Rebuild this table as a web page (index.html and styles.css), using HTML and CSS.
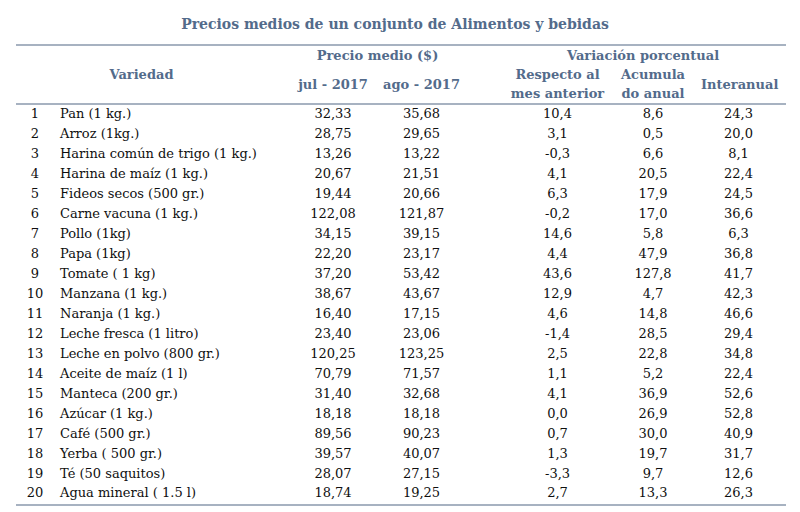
FILE: index.html
```html
<!DOCTYPE html>
<html lang="es">
<head>
<meta charset="utf-8">
<title>Precios medios</title>
<link rel="stylesheet" href="styles.css">
</head>
<body>
<div class="page">
  <h1 class="title">Precios medios de un conjunto de Alimentos y bebidas</h1>
  <table class="prices">
    <colgroup>
      <col class="c-idx"><col class="c-name"><col class="c-jul"><col class="c-ago"><col class="c-resp"><col class="c-acum"><col class="c-inter">
    </colgroup>
    <thead>
      <tr class="h1">
        <th class="variedad" colspan="2" rowspan="2">Variedad</th>
        <th class="precio" colspan="2">Precio medio ($)</th>
        <th class="variacion" colspan="3">Variación porcentual</th>
      </tr>
      <tr class="h2">
        <th>jul - 2017</th>
        <th class="ago">ago - 2017</th>
        <th class="two">Respecto al<br>mes anterior</th>
        <th class="two">Acumula<br>do anual</th>
        <th class="inter">Interanual</th>
      </tr>
    </thead>
    <tbody>
      <tr><td class="idx">1</td><td class="name">Pan (1 kg.)</td><td>32,33</td><td class="ago">35,68</td><td>10,4</td><td>8,6</td><td class="inter">24,3</td></tr>
      <tr><td class="idx">2</td><td class="name">Arroz (1kg.)</td><td>28,75</td><td class="ago">29,65</td><td>3,1</td><td>0,5</td><td class="inter">20,0</td></tr>
      <tr><td class="idx">3</td><td class="name">Harina común de trigo (1 kg.)</td><td>13,26</td><td class="ago">13,22</td><td>-0,3</td><td>6,6</td><td class="inter">8,1</td></tr>
      <tr><td class="idx">4</td><td class="name">Harina de maíz (1 kg.)</td><td>20,67</td><td class="ago">21,51</td><td>4,1</td><td>20,5</td><td class="inter">22,4</td></tr>
      <tr><td class="idx">5</td><td class="name">Fideos secos (500 gr.)</td><td>19,44</td><td class="ago">20,66</td><td>6,3</td><td>17,9</td><td class="inter">24,5</td></tr>
      <tr><td class="idx">6</td><td class="name">Carne vacuna (1 kg.)</td><td>122,08</td><td class="ago">121,87</td><td>-0,2</td><td>17,0</td><td class="inter">36,6</td></tr>
      <tr><td class="idx">7</td><td class="name">Pollo (1kg)</td><td>34,15</td><td class="ago">39,15</td><td>14,6</td><td>5,8</td><td class="inter">6,3</td></tr>
      <tr><td class="idx">8</td><td class="name">Papa (1kg)</td><td>22,20</td><td class="ago">23,17</td><td>4,4</td><td>47,9</td><td class="inter">36,8</td></tr>
      <tr><td class="idx">9</td><td class="name">Tomate ( 1 kg)</td><td>37,20</td><td class="ago">53,42</td><td>43,6</td><td>127,8</td><td class="inter">41,7</td></tr>
      <tr><td class="idx">10</td><td class="name">Manzana (1 kg.)</td><td>38,67</td><td class="ago">43,67</td><td>12,9</td><td>4,7</td><td class="inter">42,3</td></tr>
      <tr><td class="idx">11</td><td class="name">Naranja (1 kg.)</td><td>16,40</td><td class="ago">17,15</td><td>4,6</td><td>14,8</td><td class="inter">46,6</td></tr>
      <tr><td class="idx">12</td><td class="name">Leche fresca (1 litro)</td><td>23,40</td><td class="ago">23,06</td><td>-1,4</td><td>28,5</td><td class="inter">29,4</td></tr>
      <tr><td class="idx">13</td><td class="name">Leche en polvo (800 gr.)</td><td>120,25</td><td class="ago">123,25</td><td>2,5</td><td>22,8</td><td class="inter">34,8</td></tr>
      <tr><td class="idx">14</td><td class="name">Aceite de maíz (1 l)</td><td>70,79</td><td class="ago">71,57</td><td>1,1</td><td>5,2</td><td class="inter">22,4</td></tr>
      <tr><td class="idx">15</td><td class="name">Manteca (200 gr.)</td><td>31,40</td><td class="ago">32,68</td><td>4,1</td><td>36,9</td><td class="inter">52,6</td></tr>
      <tr><td class="idx">16</td><td class="name">Azúcar (1 kg.)</td><td>18,18</td><td class="ago">18,18</td><td>0,0</td><td>26,9</td><td class="inter">52,8</td></tr>
      <tr><td class="idx">17</td><td class="name">Café (500 gr.)</td><td>89,56</td><td class="ago">90,23</td><td>0,7</td><td>30,0</td><td class="inter">40,9</td></tr>
      <tr><td class="idx">18</td><td class="name">Yerba ( 500 gr.)</td><td>39,57</td><td class="ago">40,07</td><td>1,3</td><td>19,7</td><td class="inter">31,7</td></tr>
      <tr><td class="idx">19</td><td class="name">Té (50 saquitos)</td><td>28,07</td><td class="ago">27,15</td><td>-3,3</td><td>9,7</td><td class="inter">12,6</td></tr>
      <tr class="last"><td class="idx">20</td><td class="name">Agua mineral ( 1.5 l)</td><td>18,74</td><td class="ago">19,25</td><td>2,7</td><td>13,3</td><td class="inter">26,3</td></tr>
    </tbody>
  </table>
</div>
</body>
</html>
```
FILE: styles.css
```css
* { box-sizing: border-box; }
html, body { margin: 0; padding: 0; background: #ffffff; }
body {
  font-family: "DejaVu Serif", "Liberation Serif", serif;
  color: #0f0f0f;
  width: 800px;
  height: 512px;
  overflow: hidden;
}
.page { padding: 0 14px 0 16px; }
.title {
  margin: 0;
  height: 44px;
  padding: 15px 12px 0 0;
  text-align: center;
  font-size: 14px;
  line-height: 18px;
  font-weight: bold;
  color: #536b8b;
}
.prices {
  width: 770px;
  table-layout: fixed;
  border-collapse: separate;
  border-spacing: 0;
  font-size: 13px;
}
.c-idx { width: 38px; }
.c-name { width: 235px; }
.c-jul { width: 88px; }
.c-ago { width: 133px; }
.c-resp { width: 95px; }
.c-acum { width: 96px; }
.c-inter { width: 85px; }
.prices th {
  font-weight: bold;
  color: #536b8b;
  padding: 0;
  text-align: center;
  vertical-align: middle;
  line-height: 19px;
  font-size: 13px;
}
.prices .h1 { height: 20px; }
.prices .h1 th { border-top: 2px solid #a7b2c1; }
.prices .h2 { height: 36px; }
.prices .h2 th, .prices th.variedad { border-bottom: 2px solid #a7b2c1; }
.prices th.variedad { padding-right: 22px; }
.prices th.precio { padding-right: 44px; }
.prices th.variacion { padding-right: 10px; }
.prices .ago { padding-right: 44px; }
.prices .inter { padding-right: 10px; }
.prices tbody tr { height: 20px; }
.prices td {
  padding: 0 0 2px 0;
  text-align: center;
  vertical-align: middle;
  line-height: 16px;
  white-space: nowrap;
}
.prices td.ago { padding-right: 44px; }
.prices td.inter { padding-right: 10px; }
.prices td.name { text-align: left; padding-left: 6px; }
.prices tr.last { height: 19px; }
.prices tr.last td { border-bottom: 2px solid #a7b2c1; padding-bottom: 3px; }
```
